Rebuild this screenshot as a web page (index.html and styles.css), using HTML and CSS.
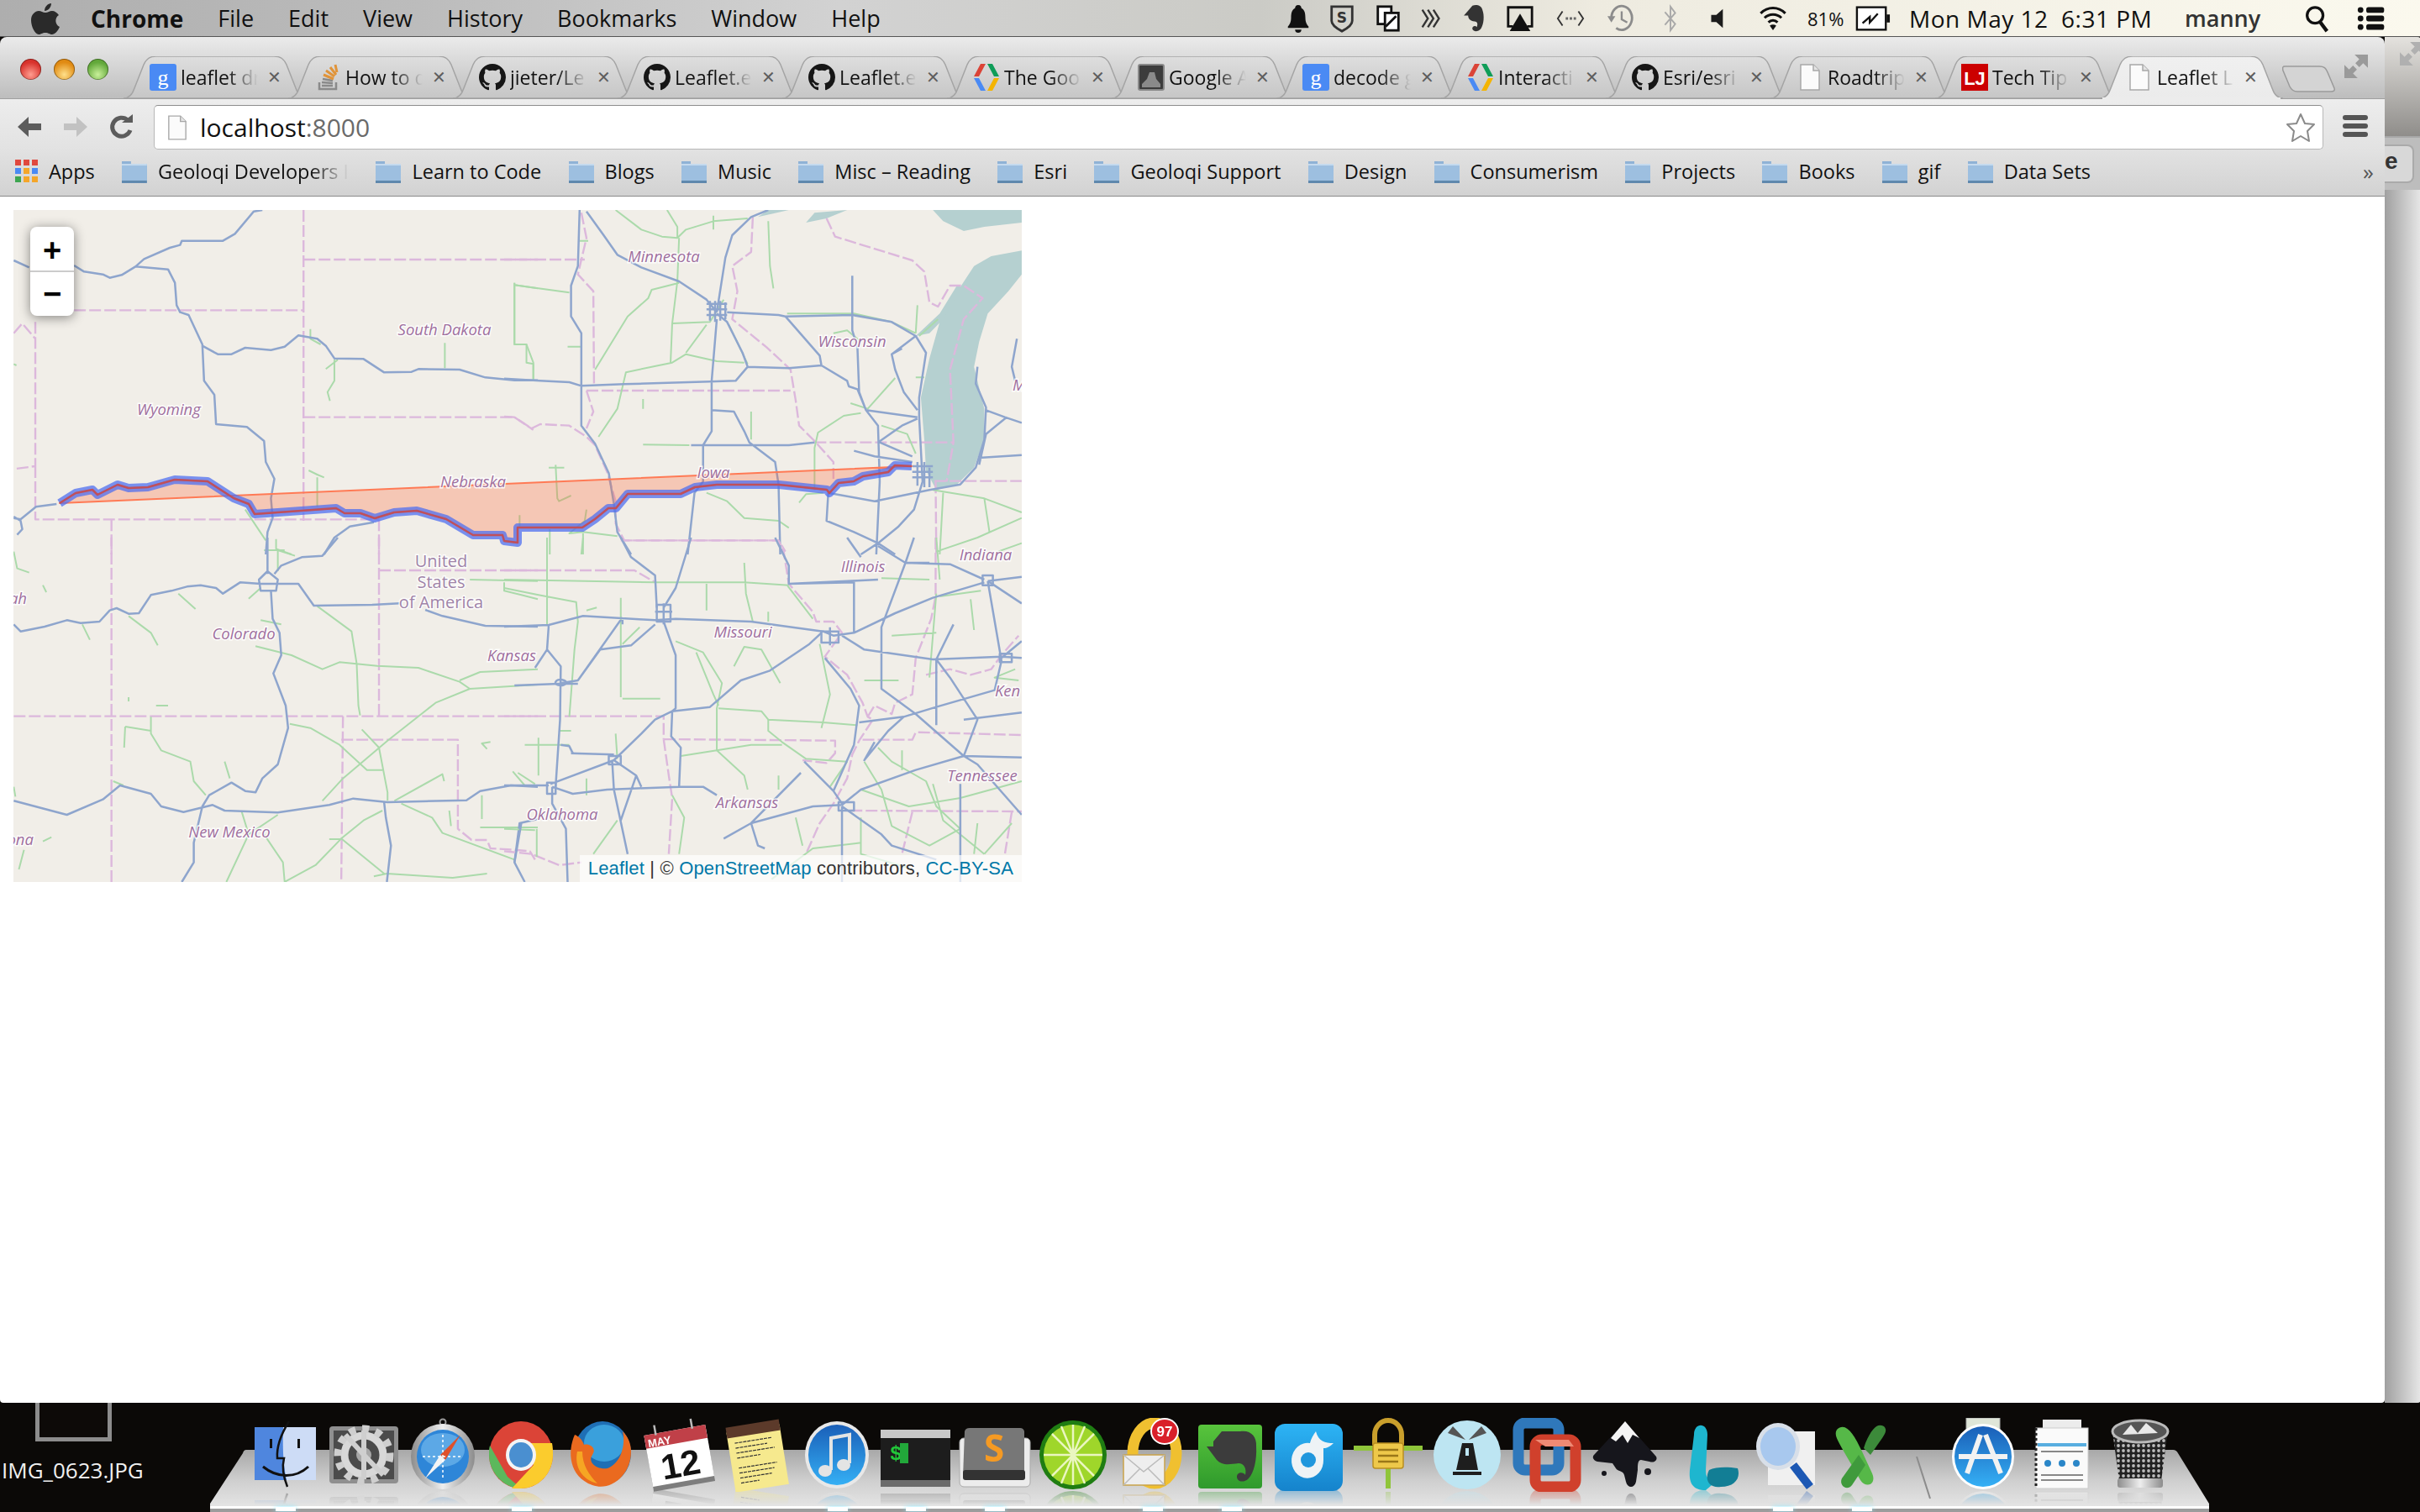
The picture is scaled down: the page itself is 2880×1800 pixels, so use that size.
FILE: index.html
```html
<!DOCTYPE html>
<html lang="en">
<head>
  <meta charset="UTF-8">
  <title>Leaflet Layers</title>
  <link rel="stylesheet" href="styles.css">
</head>
<body>
<svg class="defs" width="0" height="0">
  <defs>
    <linearGradient id="tabOff" x1="0" y1="0" x2="0" y2="1"><stop offset="0" stop-color="#dedede"/><stop offset="1" stop-color="#c6c6c6"/></linearGradient>
    <linearGradient id="tabOn" x1="0" y1="0" x2="0" y2="1"><stop offset="0" stop-color="#f0f0f0"/><stop offset="1" stop-color="#ebebeb"/></linearGradient>
    <linearGradient id="blueBall" x1="0" y1="0" x2="0" y2="1"><stop offset="0" stop-color="#1a5fb8"/><stop offset="1" stop-color="#35b0f5"/></linearGradient>
    <linearGradient id="green" x1="0" y1="0" x2="0" y2="1"><stop offset="0" stop-color="#58c43c"/><stop offset="1" stop-color="#2f9a2c"/></linearGradient>
    <linearGradient id="rdio" x1="0" y1="0" x2="0" y2="1"><stop offset="0" stop-color="#2db4f5"/><stop offset="1" stop-color="#1583cc"/></linearGradient>
    <linearGradient id="steel" x1="0" y1="0" x2="1" y2="0"><stop offset="0" stop-color="#8c8c8c"/><stop offset=".5" stop-color="#eeeeee"/><stop offset="1" stop-color="#8c8c8c"/></linearGradient>
    <linearGradient id="floorFill" x1="0" y1="0" x2="0" y2="1"><stop offset="0" stop-color="#a8a8a8"/><stop offset=".55" stop-color="#cfcfcf"/><stop offset="1" stop-color="#e4e4e4"/></linearGradient>
    <pattern id="mesh" width="6" height="6" patternUnits="userSpaceOnUse"><rect width="6" height="6" fill="#222"/><circle cx="3" cy="3" r="1.9" fill="#bbb"/></pattern>

    <symbol id="tab-shape" viewBox="0 0 218 50">
      <path d="M0,50 C8,50 11,44 13,38 L24,10 C27,3 31,0 39,0 L179,0 C187,0 191,3 194,10 L205,38 C207,44 210,50 218,50 Z"/>
    </symbol>
    <symbol id="fav-g" viewBox="0 0 32 32">
      <rect width="32" height="32" rx="3" fill="#4a8af4"/>
      <text x="16" y="25" text-anchor="middle" class="fav-g-letter">g</text>
    </symbol>
    <symbol id="fav-so" viewBox="0 0 32 32">
      <path d="M6,22 V30 H26 V22" fill="none" stroke="#8a8a8a" stroke-width="2.5"/>
      <path d="M9,26 H22 M9,22 L22,23 M10,18 L22,20" stroke="#8a8a8a" stroke-width="2.5"/>
      <path d="M11,13 L23,18 M14,8 L24,15 M19,4 L26,13 M25,1 L27,10" stroke="#e0943a" stroke-width="3"/>
    </symbol>
    <symbol id="fav-gh" viewBox="0 0 16 16">
      <path fill="#161616" d="M8 0C3.58 0 0 3.58 0 8c0 3.54 2.29 6.53 5.47 7.59.4.07.55-.17.55-.38 0-.19-.01-.82-.01-1.49-2.01.37-2.53-.49-2.69-.94-.09-.23-.48-.94-.82-1.13-.28-.15-.68-.52-.01-.53.63-.01 1.08.58 1.23.82.72 1.21 1.87.87 2.33.66.07-.52.28-.87.51-1.07-1.78-.2-3.64-.89-3.64-3.95 0-.87.31-1.59.82-2.15-.08-.2-.36-1.02.08-2.12 0 0 .67-.21 2.2.82.64-.18 1.32-.27 2-.27.68 0 1.36.09 2 .27 1.53-1.04 2.2-.82 2.2-.82.44 1.1.16 1.92.08 2.12.51.56.82 1.27.82 2.15 0 3.07-1.87 3.75-3.65 3.95.29.25.54.73.54 1.48 0 1.07-.01 1.93-.01 2.2 0 .21.15.46.55.38A8.013 8.013 0 0016 8c0-4.42-3.58-8-8-8z"/>
    </symbol>
    <symbol id="fav-dev" viewBox="0 0 32 32">
      <path d="M9,0 H15 L7,15 H1 Z" fill="#db4437"/>
      <path d="M1,17 H7 L15,32 H9 Z" fill="#4a8af4"/>
      <path d="M17,0 H23 L31,15 H25 Z" fill="#0f9d58"/>
      <path d="M25,17 H31 L23,32 H17 Z" fill="#f4b400"/>
    </symbol>
    <symbol id="fav-ga" viewBox="0 0 32 32">
      <rect x="1" y="1" width="30" height="30" rx="2" fill="#3c3c3c" stroke="#888" stroke-width="2"/>
      <path d="M5,28 L5,24 L11,18 L14,10 L20,10 L22,18 L27,24 L27,28 Z" fill="#8a8a8a"/>
    </symbol>
    <symbol id="fav-doc" viewBox="0 0 26 32">
      <path d="M2,1 H17 L24,8 V31 H2 Z" fill="#fbfbfb" stroke="#a8a8a8" stroke-width="1.5"/>
      <path d="M17,1 V8 H24" fill="#e4e4e4" stroke="#a8a8a8" stroke-width="1.5"/>
    </symbol>
    <symbol id="fav-lj" viewBox="0 0 32 32">
      <rect width="32" height="32" fill="#cc0000"/>
      <text x="16" y="25" text-anchor="middle" class="fav-lj-letters">LJ</text>
    </symbol>
    <symbol id="folder" viewBox="0 0 32 28">
      <path d="M1,28 V2 H12 V5 H31 V28 Z" fill="#8fb2d6"/>
      <rect x="1" y="5" width="30" height="23" fill="#9dbfe0"/>
      <rect x="1" y="25" width="30" height="3" fill="#5f88ad"/>
      <rect x="1" y="5" width="30" height="2" fill="#c5daee"/>
    </symbol>
  </defs>
</svg>

<div class="screen">
  <header class="menubar">
    <svg class="apple" viewBox="0 0 34 38"><path fill="#2a2a2a" d="M24,1 C24,6 20,10 16,10 C16,5 20,1 24,1 Z M17,12 C20,12 22,10 25,10 C28,10 31,12 33,15 C28,18 28,26 34,29 C32,34 28,38 25,38 C22,38 21,36 17,36 C13,36 12,38 9,38 C5,38 0,29 0,21 C0,14 5,10 9,10 C12,10 14,12 17,12 Z"/></svg>
    <nav class="menus">
      <span class="menu-app">Chrome</span>
      <span>File</span>
      <span>Edit</span>
      <span>View</span>
      <span>History</span>
      <span>Bookmarks</span>
      <span>Window</span>
      <span>Help</span>
    </nav>
    <div class="tray">
      <svg viewBox="0 0 32 36"><path fill="#111" d="M16,1 C19,1 20,3 20,5 C24,7 25,11 25,17 C25,23 27,26 29,28 V30 H3 V28 C5,26 7,23 7,17 C7,11 8,7 12,5 C12,3 13,1 16,1 Z M12,32 H20 C20,35 18,36 16,36 C14,36 12,35 12,32 Z"/></svg>
      <svg viewBox="0 0 32 36"><path fill="none" stroke="#333" stroke-width="3" d="M3,3 H29 V21 C29,27 22,31 16,34 C10,31 3,27 3,21 Z"/><text x="16" y="23" text-anchor="middle" class="tray-s">S</text></svg>
      <svg viewBox="0 0 32 36"><rect x="3" y="3" width="17" height="22" fill="#fff" stroke="#111" stroke-width="3"/><rect x="12" y="11" width="17" height="22" fill="#fff" stroke="#111" stroke-width="3"/><path d="M13,28 L26,15" stroke="#111" stroke-width="3"/></svg>
      <svg viewBox="0 0 32 36"><path fill="none" stroke="#333" stroke-width="2.5" d="M4,7 L11,18 L4,29 M11,7 L18,18 L11,29 M18,7 L25,18 L18,29"/></svg>
      <svg viewBox="0 0 32 40"><path fill="#333" d="M9,8 L14,2 C20,0 27,2 28,8 C31,16 30,28 26,34 C22,39 16,39 14,35 C13,31 18,29 20,32 C22,28 21,24 17,24 C11,24 8,20 8,16 H2 Z"/></svg>
      <svg viewBox="0 0 36 36"><path fill="none" stroke="#111" stroke-width="3" d="M9,28 H3 V4 H33 V28 H27"/><path fill="#111" d="M18,12 L31,34 H5 Z"/></svg>
      <svg viewBox="0 0 36 24"><path fill="none" stroke="#333" stroke-width="2" d="M8,3 L2,12 L8,21 M28,3 L34,12 L28,21"/><path stroke="#666" stroke-width="3" stroke-dasharray="3 2" d="M12,12 H25"/></svg>
      <svg viewBox="0 0 36 36"><path fill="none" stroke="#8c8c8c" stroke-width="3" d="M6,18 A13,15 0 1 1 12,30"/><path fill="#8c8c8c" d="M1,15 H11 L6,23 Z"/><path fill="none" stroke="#8c8c8c" stroke-width="2.5" d="M19,9 V19 L26,23"/></svg>
      <svg viewBox="0 0 20 36"><path fill="none" stroke="#a8a8a8" stroke-width="2" d="M3,10 L16,25 L10,33 V3 L16,11 L3,26"/></svg>
      <svg class="tray-sound" viewBox="0 0 26 30"><path fill="#1c1c1c" d="M2,10 H9 L18,2 V28 L9,20 H2 Z"/></svg>
      <svg viewBox="0 0 44 40"><path fill="none" stroke="#111" stroke-width="4" d="M3,12 C14,1 30,1 41,12 M9,19 C16,12 28,12 35,19 M15,26 C19,22 25,22 29,26"/><path fill="#111" d="M22,38 L17,31 C20,29 24,29 27,31 Z"/></svg>
      <span class="tray-pct">81%</span>
      <svg class="tray-batt" viewBox="0 0 44 32"><rect x="2" y="2" width="36" height="28" fill="#fff" stroke="#111" stroke-width="2.5"/><rect x="39" y="11" width="4" height="10" fill="#111"/><path fill="none" stroke="#111" stroke-width="2.5" d="M9,22 L18,14 L18,21 L28,10"/></svg>
      <span class="tray-clock">Mon May 12  6:31 PM</span>
      <span class="tray-user">manny</span>
      <svg viewBox="0 0 32 36"><circle cx="14" cy="14" r="10" fill="none" stroke="#111" stroke-width="3.5"/><path stroke="#111" stroke-width="4.5" d="M20,22 L29,34"/></svg>
      <svg viewBox="0 0 40 36"><g fill="#111"><circle cx="5" cy="6" r="4"/><rect x="13" y="2" width="25" height="8" rx="3"/><circle cx="5" cy="18" r="4"/><rect x="13" y="14" width="25" height="8" rx="3"/><circle cx="5" cy="30" r="4"/><rect x="13" y="26" width="25" height="8" rx="3"/></g></svg>
    </div>
  </header>

  <div class="desktop">
    <main class="window">
      <div class="tabstrip">
        <div class="lights"><i class="light red"></i><i class="light amber"></i><i class="light lime"></i></div>
        <div class="tab"><svg class="tab-bg"><use href="#tab-shape"/></svg><svg class="fav"><use href="#fav-g"/></svg><span class="tab-title">leaflet dr</span><span class="tab-x">✕</span></div>
        <div class="tab"><svg class="tab-bg"><use href="#tab-shape"/></svg><svg class="fav"><use href="#fav-so"/></svg><span class="tab-title">How to d</span><span class="tab-x">✕</span></div>
        <div class="tab"><svg class="tab-bg"><use href="#tab-shape"/></svg><svg class="fav"><use href="#fav-gh"/></svg><span class="tab-title">jieter/Le</span><span class="tab-x">✕</span></div>
        <div class="tab"><svg class="tab-bg"><use href="#tab-shape"/></svg><svg class="fav"><use href="#fav-gh"/></svg><span class="tab-title">Leaflet.e</span><span class="tab-x">✕</span></div>
        <div class="tab"><svg class="tab-bg"><use href="#tab-shape"/></svg><svg class="fav"><use href="#fav-gh"/></svg><span class="tab-title">Leaflet.e</span><span class="tab-x">✕</span></div>
        <div class="tab"><svg class="tab-bg"><use href="#tab-shape"/></svg><svg class="fav"><use href="#fav-dev"/></svg><span class="tab-title">The Goo</span><span class="tab-x">✕</span></div>
        <div class="tab"><svg class="tab-bg"><use href="#tab-shape"/></svg><svg class="fav"><use href="#fav-ga"/></svg><span class="tab-title">Google A</span><span class="tab-x">✕</span></div>
        <div class="tab"><svg class="tab-bg"><use href="#tab-shape"/></svg><svg class="fav"><use href="#fav-g"/></svg><span class="tab-title">decode g</span><span class="tab-x">✕</span></div>
        <div class="tab"><svg class="tab-bg"><use href="#tab-shape"/></svg><svg class="fav"><use href="#fav-dev"/></svg><span class="tab-title">Interacti</span><span class="tab-x">✕</span></div>
        <div class="tab"><svg class="tab-bg"><use href="#tab-shape"/></svg><svg class="fav"><use href="#fav-gh"/></svg><span class="tab-title">Esri/esri</span><span class="tab-x">✕</span></div>
        <div class="tab"><svg class="tab-bg"><use href="#tab-shape"/></svg><svg class="fav fav-page"><use href="#fav-doc"/></svg><span class="tab-title">Roadtrip</span><span class="tab-x">✕</span></div>
        <div class="tab"><svg class="tab-bg"><use href="#tab-shape"/></svg><svg class="fav"><use href="#fav-lj"/></svg><span class="tab-title">Tech Tip</span><span class="tab-x">✕</span></div>
        <div class="tab tab-on"><svg class="tab-bg"><use href="#tab-shape"/></svg><svg class="fav fav-page"><use href="#fav-doc"/></svg><span class="tab-title">Leaflet L</span><span class="tab-x">✕</span></div>
        <svg class="newtab" viewBox="0 0 64 34"><path d="M3,2 H44 C50,2 52,4 54,9 L62,28 C63,31 61,32 58,32 H18 C13,32 11,30 9,26 L1,7 C0,3 1,2 3,2 Z" fill="#d4d4d4" stroke="#9a9a9a" stroke-width="1.5"/></svg>
        <svg class="expand" viewBox="0 0 30 30"><path fill="#9a9a9a" d="M0,30 V13 L6,19 L11,14 L16,19 L11,24 L17,30 Z M30,0 V17 L24,11 L19,16 L14,11 L19,6 L13,0 Z"/></svg>
      </div>

      <div class="toolbar">
        <svg class="tool" viewBox="0 0 30 30"><path fill="#5c5c5c" d="M14,3 V11 H29 V19 H14 V27 L1,15 Z"/></svg>
        <svg class="tool" viewBox="0 0 30 30"><path fill="#c2c2c2" d="M16,3 V11 H1 V19 H16 V27 L29,15 Z"/></svg>
        <svg class="tool" viewBox="0 0 30 30"><path fill="none" stroke="#5c5c5c" stroke-width="5" d="M25,19 A11,11 0 1 1 22,7"/><path fill="#5c5c5c" d="M15,10 H28 V0 Z"/></svg>
        <div class="omnibox">
          <svg class="omni-page"><use href="#fav-doc"/></svg>
          <span class="url">localhost<em>:8000</em></span>
          <svg class="star" viewBox="0 0 36 36"><path fill="#fff" stroke="#8a8a8a" stroke-width="2" stroke-linejoin="round" d="M18,2 L23,13 L34,14 L26,22 L28,34 L18,28 L8,34 L10,22 L2,14 L13,13 Z"/></svg>
        </div>
        <div class="hamburger"><i></i><i></i><i></i></div>
      </div>

      <div class="bookmarks">
        <div class="bm bm-apps">
          <svg class="apps-grid" viewBox="0 0 28 28"><g><rect width="7" height="7" x="0" y="0" fill="#e0483e"/><rect width="7" height="7" x="10" y="0" fill="#e0483e"/><rect width="7" height="7" x="20" y="0" fill="#e0483e"/><rect width="7" height="7" x="0" y="10" fill="#4a8af4"/><rect width="7" height="7" x="10" y="10" fill="#f4a62a"/><rect width="7" height="7" x="20" y="10" fill="#4a8af4"/><rect width="7" height="7" x="0" y="20" fill="#3da650"/><rect width="7" height="7" x="10" y="20" fill="#f4a62a"/><rect width="7" height="7" x="20" y="20" fill="#f4a62a"/></g></svg>
          <span>Apps</span>
        </div>
        <div class="bm bm-long"><svg class="folder"><use href="#folder"/></svg><span class="bm-fade">Geoloqi Developers I</span></div>
        <div class="bm"><svg class="folder"><use href="#folder"/></svg><span>Learn to Code</span></div>
        <div class="bm"><svg class="folder"><use href="#folder"/></svg><span>Blogs</span></div>
        <div class="bm"><svg class="folder"><use href="#folder"/></svg><span>Music</span></div>
        <div class="bm"><svg class="folder"><use href="#folder"/></svg><span>Misc – Reading</span></div>
        <div class="bm"><svg class="folder"><use href="#folder"/></svg><span>Esri</span></div>
        <div class="bm"><svg class="folder"><use href="#folder"/></svg><span>Geoloqi Support</span></div>
        <div class="bm"><svg class="folder"><use href="#folder"/></svg><span>Design</span></div>
        <div class="bm"><svg class="folder"><use href="#folder"/></svg><span>Consumerism</span></div>
        <div class="bm"><svg class="folder"><use href="#folder"/></svg><span>Projects</span></div>
        <div class="bm"><svg class="folder"><use href="#folder"/></svg><span>Books</span></div>
        <div class="bm"><svg class="folder"><use href="#folder"/></svg><span>gif</span></div>
        <div class="bm"><svg class="folder"><use href="#folder"/></svg><span>Data Sets</span></div>
        <span class="bm-more">»</span>
      </div>

      <div class="content">
        <div class="map">
          <svg class="map-svg" viewBox="16 250 1200 800" width="1200" height="800">
            <!-- water -->
            <g transform="translate(600 240) scale(.40816 .33333)" class="lake">
              <path d="M1330,305 L1370,230 L1420,195 L1509,175 L1509,260 L1470,320 L1410,400 L1385,500 L1370,590 L1400,740 L1400,850 L1370,950 L1320,1010 L1260,1030 L1230,960 L1225,850 L1215,700 L1240,560 L1270,430 Z"/>
              <path d="M1200,480 L1270,400 L1320,300 L1335,305 L1280,420 L1240,470 Z"/>
              <path d="M880,75 L905,40 L1000,30 L940,60 Z"/>
              <path d="M1250,30 L1509,30 L1509,75 L1400,90 L1340,105 L1280,70 Z"/>
              <path d="M740,55 L830,30 L770,30 Z"/>
            </g>
            <!-- north west -->
            <g class="roads" transform="translate(0 240) scale(.40816 .33333)">
              <path class="b" d="M885,30 L885,1140 M885,207 L1568,207 M216,388 L885,388 M103,430 L103,945 L40,955 M40,470 L65,435 L103,490 M885,770 L1500,770 L1555,815 M103,945 L103,1135 L1105,1135 M325,1135 L325,1260 M1105,1135 L1105,1260"/>
              <path class="g" d="M1500,290 L1500,510 L1535,510 L1535,575 L1555,580 L1555,638 M1500,298 L1568,310 M1297,505 L1297,595 M905,455 L905,490 L935,510 M985,565 L950,598 M975,565 L975,640 L955,680 L962,712 M900,960 L925,975 L945,985 M925,985 L925,1090 M715,1100 L775,1210 M805,1205 L805,1240 L850,1260 M770,1245 L830,1245 M40,580 L48,585"/>
              <path class="r" d="M40,210 L85,235 M216,228 L245,250 L300,260 L320,272 L355,262 L395,232 L420,205 L495,165 L525,155 L530,140 L650,140 L685,115 L740,35 L765,30 M395,232 L490,242 L510,290 L515,370 L525,395 L550,405 L590,510 L595,640 L625,690 L630,795 L720,805 L770,855 L775,930 L800,990 L790,1060 L795,1130 L780,1180 L775,1260 M590,515 L635,545 L675,545 L715,522 L790,530 L830,518 L870,478 L925,490 L950,515 L975,560 L1060,562 L1120,610 L1200,608 L1220,598 L1340,600 L1415,628 L1500,638 L1568,638 M40,1130 L60,1135 L105,1090 L165,1080 M40,1125 L60,1140 L65,1170 L50,1190 M1090,1145 L1020,1160 L975,1200 L945,1260"/>
            </g>
            <!-- north east -->
            <g class="roads" transform="translate(600 240) scale(.40816 .33333)">
              <path class="b" d="M0,207 L235,207 M225,40 L240,130 L215,260 L260,320 L262,650 M240,675 L835,675 M240,675 L260,750 L240,810 M0,768 L30,770 L80,810 L105,795 L190,800 L240,840 L265,870 L300,965 L325,1070 L325,1150 L350,1210 L800,1210 L820,1250 M725,55 L720,180 L665,230 L680,320 L665,420 L765,520 L835,600 L850,710 L860,800 L905,855 L960,930 L960,990 M905,860 L1310,860 M940,60 L965,125 L1190,210 L1225,250 L1240,360 L1265,375 L1300,300 L1340,300 L1395,345 L1340,420 L1300,600 L1310,860 L1290,1000 M1255,998 L1509,998 M1258,1000 L1260,1260"/>
              <path class="g" d="M30,290 L30,510 L65,510 L85,575 L85,632 M30,298 L100,310 L190,325 M185,518 L225,518 M220,140 L245,140 M265,600 L360,410 L420,345 L430,315 L510,290 M510,130 L505,285 L490,435 L485,580 M325,30 L400,100 L460,125 L505,130 L530,100 L610,70 L710,60 M610,50 L610,100 M475,30 L505,90 L505,130 M770,70 L775,230 L785,310 M490,435 L600,430 L640,350 M530,540 L590,440 M275,840 L330,740 L355,610 L430,590 L490,575 L530,545 L620,570 L700,575 M405,705 L405,740 M655,440 L710,580 M825,400 L1020,400 L1130,430 L1200,470 M1200,470 L1205,370 M1210,480 L1265,420 M1040,500 L1000,460 L960,470 M1140,630 L1060,740 L1010,720 M1200,628 L1225,628 M1040,755 L990,765 L915,825 L905,880 L905,1030 M1100,800 L1175,830 L1200,900 M720,750 L720,850 M150,940 L155,1060 L160,1070 L195,1050 M130,950 L175,950 M405,868 L540,870 M240,1100 L235,1140 L190,1185 L230,1180 L330,1195 M230,1185 L230,1260 M45,1120 L45,1160 M133,1170 L133,1260 M590,1040 L650,1070 L700,1130 L800,1140 L830,1165 M860,1075 L880,1045 L930,1040 M1250,1030 L1400,1060 L1509,1110 M1280,1040 L1270,1260 M1400,1060 L1415,1180 M1509,1130 L1380,1200 L1260,1250"/>
              <path class="r" d="M220,30 L215,230 L195,300 L195,410 L225,470 L225,800 L265,865 L305,970 L320,1080 L330,1180 L370,1260 M240,35 L290,120 L330,190 L400,235 L510,285 L590,350 L620,395 M0,632 L105,640 L190,645 L225,658 L350,652 L600,643 L675,640 L710,590 L830,595 L925,585 L1000,640 L1005,660 L1030,670 L1055,745 M650,395 L800,405 L820,410 L920,550 L925,585 M620,395 L645,200 L665,120 L720,55 L770,30 M620,420 L605,640 L605,820 L580,870 L580,1000 L555,1040 L535,1260 M605,745 L670,750 L700,820 L715,860 L790,930 L800,1010 L805,1260 M545,870 L830,870 L905,860 M820,410 L1015,405 L1130,430 L1200,480 L1230,540 L1210,700 L1210,770 M1015,265 L1015,460 L1030,520 L1035,680 L1055,745 L1090,800 L1095,1000 L1085,1260 M1055,745 L1205,770 M1130,545 L1140,600 L1165,680 L1205,745 M1200,480 L1130,545 L1160,525 M1090,860 L1160,800 L1205,775 M1095,860 L1190,910 M1020,890 L1080,910 L1190,930 M1210,770 L1220,1000 L1195,1100 L1150,1160 L1090,1220 L1040,1260 M1380,590 L1375,650 L1405,735 L1400,850 L1375,950 L1330,1010 L1240,1030 M1495,490 L1480,590 L1490,640 M1405,745 L1460,770 L1509,790 M1465,770 L1405,830 L1385,940 M1385,915 L1509,905 M945,1040 L1080,1070 L1240,1030 M945,1040 L940,1140 L1020,1180 L1090,1220 L1140,1260 M710,590 L695,540 L650,430 L620,400"/>
              <path class="r" d="M590,365 H650 M590,385 H650 M590,405 H650 M600,355 V425 M615,355 V430 M630,355 V425 M645,360 V420 M1190,945 H1250 M1190,965 H1250 M1190,985 H1250 M1205,930 V1015 M1225,930 V1020 M1240,950 V1020"/>
            </g>
            <!-- south west -->
            <g class="roads" transform="translate(0 640) scale(.40816 .33333)">
              <path class="b" d="M40,638 L1568,638 M325,0 L325,1230 M1105,0 L1105,638 M1105,117 L1568,117 M1000,638 L995,1230 M995,722 L1335,722 L1335,1040 L1375,1080 L1420,1080 L1430,1110 L1500,1115 L1545,1120 L1560,1150"/>
              <path class="g" d="M40,50 L50,110 L85,125 M125,170 L135,195 M520,200 L570,255 M375,280 L440,340 L460,385 M240,310 L262,365 M760,295 L820,310 M745,388 L850,420 L940,470 L990,445 L1100,458 L1220,465 L1340,515 L1370,540 L1568,525 M1340,510 L1400,480 L1568,470 M925,245 L1025,335 L1040,450 L1045,600 L1050,635 M1370,540 L1270,590 L1130,725 L1000,860 L940,940 M1055,685 L1105,750 L1130,910 L1130,940 M845,665 L905,680 L990,740 L1070,830 L1115,830 M1150,940 L1290,845 L1295,870 M1170,950 L1260,1000 L1290,1055 L1500,1150 M1115,975 L1060,1010 L995,1075 L920,1170 L830,1230 M995,1075 L1120,1200 M960,1077 L995,1077 M705,980 L725,1060 L660,1230 M770,1060 L825,1160 L830,1230 M810,990 L725,1060 M440,640 L440,700 L470,760 L555,800 L565,870 L600,920 M365,675 L440,690 M365,675 L362,750 M655,800 L670,860 M725,218 L760,180 M810,120 L810,45 L860,65 M1430,730 L1405,735 L1420,755 M1495,835 L1530,885 M1090,1210 L1128,1200 L1320,1215 L1420,1200 M1400,1035 L1568,1035 M1405,920 L1405,1005 M1310,975 L1315,1030 M1470,160 L1470,190 L1520,205 L1568,220 M1370,150 L1568,155 M330,870 L360,885 M375,570 L375,585 M455,600 L490,600 M40,890 L45,925 M125,1085 L150,1070 M70,1115 L55,1185"/>
              <path class="r" d="M780,0 L780,130 M985,0 L940,65 L880,70 L820,100 L800,130 M40,310 L60,335 L130,318 L195,295 L235,305 L290,300 L320,260 L340,252 L375,272 L405,270 L440,205 L500,190 L545,175 L585,170 L630,180 L650,200 L700,160 L760,165 L870,165 L915,243 L1085,240 L1165,235 M1240,258 L1290,280 L1415,315 L1568,318 M790,190 L795,290 L815,340 L820,420 L797,485 L833,600 L840,680 L810,810 L765,860 L745,910 L715,905 L675,875 L610,920 L590,960 L565,1090 L565,1160 L530,1230 M40,940 L195,990 L300,935 L350,885 L440,915 L470,960 L535,980 L620,955 L655,975 L810,982 L960,955 L1030,932 L1130,945 L1360,938 L1400,905 L1490,885 L1568,890 M1120,945 L1125,1000 L1140,1100 L1128,1230 M1568,1005 L1515,1020 L1500,1160 M780,120 L755,150 L760,190 L805,190 L810,150 Z"/>
            </g>
            <!-- south east -->
            <g class="roads" transform="translate(600 640) scale(.40816 .33333)">
              <path class="b" d="M0,117 L380,117 L440,160 M340,10 L800,10 L815,50 L830,165 L900,265 L910,300 L960,300 L985,340 L935,425 L1000,490 L1045,590 L1060,640 L1075,650 L1035,725 L1015,775 L1000,860 L960,950 L920,1020 L880,1130 M0,638 L465,638 L465,720 M465,720 L965,725 L965,770 L940,805 L870,795 M1045,722 L1190,722 L1200,695 L1509,705 M1258,0 L1258,210 L1245,290 L1200,430 L1190,560 L1140,590 L1130,630 L1080,600 L1060,640 M1230,490 L1300,470 L1360,490 L1420,470 L1450,420 L1500,350 M465,720 L480,850 L490,930 L480,1130 M0,1120 L80,1130 L160,1170 L225,1160 M1010,975 L1509,978 M1190,980 L1160,1130 M1480,980 L1460,1130"/>
              <path class="g" d="M0,150 L440,160 L700,160 L830,170 M125,0 L125,310 M230,0 L225,60 M0,180 L100,205 L210,230 L215,300 L205,400 L190,640 M340,215 L340,570 M240,260 L270,250 M345,575 L455,575 M590,165 L590,260 M700,90 L705,200 L725,300 M500,370 L580,410 L635,520 L620,610 L620,760 L700,850 L710,900 M560,410 L610,560 L625,600 M770,265 L770,300 M805,520 L750,400 L700,390 L670,460 M625,610 L750,620 L770,650 L930,660 L1030,670 M770,650 L770,690 L810,730 L880,790 L1000,800 M515,780 L620,760 L720,740 L810,740 M60,740 L190,740 M100,715 L100,850 M345,380 L395,320 M40,840 L90,880 M240,860 L240,920 M325,700 L330,790 M0,1040 L90,1045 M95,1040 L95,1140 M330,1010 L260,1130 M490,920 L525,1000 L510,1130 M800,850 L800,900 M920,380 L950,560 L925,680 M825,170 L900,290 M1050,510 L1150,510 M1130,350 L1260,340 M1260,200 L1240,500 M1360,220 L1370,330 M1390,190 L1270,210 M1260,0 L1270,150 M1050,800 L1100,900 L1130,1030 L1240,1100 L1330,1040 M1000,800 L950,890 M1090,750 L1130,800 L1230,870 L1260,960 L1330,1040 M1040,900 L1180,960 L1330,930 L1509,870 M1160,760 L1160,830 M1250,880 L1280,1010 L1400,1130 M850,1000 L870,1100 M1040,1000 L1040,1130 L1180,1180 M780,1220 L900,1110 L1040,1090 M1480,1020 L1400,1130 M1380,1020 L1370,1130 M1509,20 L1440,50 M1490,470 L1430,500 L1500,510 M1100,145 L1240,150 M160,690 L195,690"/>
              <path class="r" d="M340,0 L370,70 L440,135 L445,250 M545,0 L500,180 L465,250 M0,318 L130,312 L230,280 L440,295 L500,290 L720,300 L840,320 L930,335 L960,350 L1020,340 L1140,270 L1250,215 L1400,160 M130,312 L125,400 L165,460 L163,650 L150,890 M125,400 L90,465 M30,528 L160,522 L215,522 M345,285 L215,510 L165,520 M345,285 L345,310 M440,310 L370,385 L280,400 L215,510 M465,300 L500,420 L500,610 L490,620 L600,605 L690,510 L775,475 L890,380 L925,340 M490,620 L440,650 L400,700 L320,795 L135,880 M490,620 L487,710 L515,750 L510,890 M320,795 L385,850 L400,890 M195,770 L320,775 M165,740 L190,745 L200,770 M140,890 L200,915 L300,900 L510,890 L580,890 L620,920 M140,890 L140,950 L180,1040 L185,1230 M0,885 L130,885 M315,800 L320,900 L360,1130 M385,850 L340,1010 M50,1020 L30,1160 L60,1230 M720,1020 L900,960 L985,955 L1040,900 L1200,830 L1340,780 L1509,785 M720,1020 L640,1075 M720,1020 L740,1100 L760,1110 M865,840 L720,1020 M985,950 L960,905 L1020,740 L1035,600 L1010,540 L935,430 M985,960 L985,1230 M985,960 L1100,1060 L1130,1100 L1260,1150 M960,905 L875,800 M1340,780 L1200,630 L1100,540 L1100,320 L1170,90 L1240,90 M1340,780 L1380,650 L1300,500 L1260,435 L1310,310 M1035,660 L1165,640 L1260,605 L1430,545 L1450,440 L1410,155 M1165,640 L1120,690 L1050,795 L1080,730 M985,350 L1050,400 L1250,435 L1450,425 L1509,430 M1340,780 L1380,810 L1509,990 M1260,435 L1260,670 M1410,155 L1509,235 M1410,155 L1509,140 M1170,90 L1300,95 L1400,150 M1020,340 L1020,160 L830,165 L1090,150 M1090,30 L1170,90 L1195,0 M830,165 L830,100 L790,0 M1000,0 L1040,70 M1450,430 L1509,370 M1340,650 L1509,625 M1330,880 L1330,1230"/>
              <path class="r" d="M445,240 H485 V300 H445 Z M440,265 H490 M465,235 V310 M925,335 H975 V375 H925 Z M950,320 V385 M305,780 H340 V810 H305 Z M125,875 H150 V915 H125 Z M150,515 A15,10 0 1 0 180,520 A15,10 0 1 0 150,515 M1395,135 H1425 V170 H1395 Z M1445,415 H1480 V445 H1445 Z M975,945 H1020 V975 H975 Z"/>
            </g>

            <!-- route -->
            <path class="route-fill" d="M71,599 L90,587 L110,583 L116,589 L140,577 L153,581 L176,580 L208,571 L247,573 L278,593 L296,600 L303,612 L400,605 L410,611 L429,611 L446,617 L469,610 L496,608 L531,618 L563,637 L598,637 L600,644 L616,646 L616,628 L693,628 L708,618 L724,605 L733,605 L747,588 L810,588 L827,580 L853,577 L927,577 L984,583 L987,587 L998,575 L1016,573 L1027,567 L1057,562 L1065,554 L1085,555 Z"/>
            <path class="route-blue" d="M71,599 L90,587 L110,583 L116,589 L140,577 L153,581 L176,580 L208,571 L247,573 L278,593 L296,600 L303,612 L400,605 L410,611 L429,611 L446,617 L469,610 L496,608 L531,618 L563,637 L598,637 L600,644 L616,646 L616,628 L693,628 L708,618 L724,605 L733,605 L747,588 L810,588 L827,580 L853,577 L927,577 L984,583 L987,587 L998,575 L1016,573 L1027,567 L1057,562 L1065,554 L1085,555"/>
            <path class="route-red" d="M71,599 L90,587 L110,583 L116,589 L140,577 L153,581 L176,580 L208,571 L247,573 L278,593 L296,600 L303,612 L400,605 L410,611 L429,611 L446,617 L469,610 L496,608 L531,618 L563,637 L598,637 L600,644 L616,646 L616,628 L693,628 L708,618 L724,605 L733,605 L747,588 L810,588 L827,580 L853,577 L927,577 L984,583 L987,587 L998,575 L1016,573 L1027,567 L1057,562 L1065,554 L1085,555"/>

            <!-- labels -->
            <g class="labels">
              <text x="529" y="399">South Dakota</text>
              <text x="201" y="494">Wyoming</text>
              <text x="563" y="580">Nebraska</text>
              <text x="790" y="312">Minnesota</text>
              <text x="1014" y="413">Wisconsin</text>
              <text x="849" y="569">Iowa</text>
              <text x="1205" y="465" class="start">M</text>
              <text x="290" y="761">Colorado</text>
              <text x="609" y="787">Kansas</text>
              <text x="273" y="997">New Mexico</text>
              <text x="32" y="719" class="end">ah</text>
              <text x="40" y="1006" class="end">ona</text>
              <text x="884" y="759">Missouri</text>
              <text x="1027" y="681">Illinois</text>
              <text x="1173" y="667">Indiana</text>
              <text x="1184" y="829" class="start">Ken</text>
              <text x="1169" y="930">Tennessee</text>
              <text x="889" y="962">Arkansas</text>
              <text x="669" y="976">Oklahoma</text>
            </g>
            <g class="labels labels-country">
              <text x="525" y="675">United</text>
              <text x="525" y="700">States</text>
              <text x="525" y="724">of America</text>
            </g>
          </svg>
          <div class="zoom-ctl">
            <a class="zoom-btn zoom-in">+</a>
            <a class="zoom-btn zoom-out">−</a>
          </div>
          <div class="attribution"><a>Leaflet</a> | © <a>OpenStreetMap</a> contributors, <a>CC-BY-SA</a></div>
        </div>
      </div>
    </main>

    <aside class="behind">
      <div class="behind-top">
        <svg class="behind-expand" viewBox="0 0 30 30"><path fill="#b0b0b0" d="M0,30 V13 L6,19 L11,14 L16,19 L11,24 L17,30 Z M30,0 V17 L24,11 L19,16 L14,11 L19,6 L13,0 Z"/></svg>
      </div>
      <div class="behind-btn"><span>e</span></div>
      <div class="behind-rest"></div>
    </aside>
  </div>

  <footer class="dock">
    <svg class="floor" viewBox="0 0 2880 130" width="2880" height="130">
      <path class="floor-top" d="M293,56 H2586 Q2590,56 2592,60 L2629,120 V123 H250 V120 L289,60 Q290,56 293,56 Z"/>
      <rect class="floor-shine" x="250" y="123" width="2379" height="3"/>
      <rect class="floor-edge" x="250" y="126" width="2379" height="4"/>
      <path class="floor-sep" d="M2281,64 L2297,114"/>
    </svg>
    <div class="desk-file">
      <div class="desk-thumb"></div>
      <div class="desk-name">IMG_0623.JPG</div>
    </div>
    <div class="dock-apps">
      <div class="dock-item"><svg viewBox="0 0 94 88"><rect x="11" y="11" width="73" height="63" fill="#4f86de"/><path d="M45,11 H84 V74 H49 C46,60 44,45 45,11 Z" fill="#cddcf6"/><path d="M52,4 C42,20 37,35 38,48 L46,48 C43,60 46,72 50,82" fill="none" stroke="#111" stroke-width="2.5"/><path d="M21,58 C38,72 60,72 75,58" fill="none" stroke="#111" stroke-width="3"/><rect x="29" y="25" width="3" height="11" fill="#111"/><rect x="62" y="25" width="3" height="11" fill="#111"/></svg><i class="run"></i></div>
      <div class="dock-item"><svg viewBox="0 0 94 88"><rect x="6" y="10" width="82" height="68" rx="4" fill="#8f8f8f"/><rect x="11" y="15" width="72" height="58" fill="#4b4b4b"/><circle cx="47" cy="44" r="23" fill="none" stroke="#d8d8d8" stroke-width="9"/><circle cx="47" cy="44" r="31" fill="none" stroke="#cfcfcf" stroke-width="9" stroke-dasharray="8 8"/><circle cx="47" cy="44" r="9" fill="#a8a8a8"/><path d="M25,20 L47,44 M70,68 L47,44 M47,15 V73" stroke="#cfcfcf" stroke-width="6"/></svg></div>
      <div class="dock-item"><svg viewBox="0 0 94 88"><circle cx="47" cy="5" r="3.5" fill="none" stroke="#999" stroke-width="2"/><ellipse cx="47" cy="46" rx="38" ry="39" fill="url(#steel)"/><ellipse cx="47" cy="46" rx="31" ry="32" fill="#2e86d8"/><ellipse cx="47" cy="38" rx="26" ry="20" fill="#7cc0f0" opacity=".6"/><path d="M68,20 L50,50 L44,44 Z" fill="#e0502a"/><path d="M26,72 L44,44 L50,50 Z" fill="#f4f4f4"/><path d="M47,20 V72 M23,46 H71" stroke="#fff" stroke-width="1.5" stroke-dasharray="3 3"/></svg></div>
      <div class="dock-item"><svg viewBox="0 0 94 88"><ellipse cx="47" cy="44" rx="38" ry="40" fill="#db4437"/><path d="M10,33 L31,70 L47,84 C28,84 9,66 9,44 C9,40 9,36 10,33 Z" fill="#5cb85c"/><path d="M47,30 H84 C85,35 85,40 85,44 C85,66 68,84 47,84 L36,84 L62,56 Z" fill="#fbcc2d"/><ellipse cx="47" cy="44" rx="18" ry="19" fill="#f4f4f4"/><ellipse cx="47" cy="44" rx="14" ry="15" fill="#4a8fd0"/></svg><i class="run"></i></div>
      <div class="dock-item"><svg viewBox="0 0 94 88"><ellipse cx="50" cy="42" rx="34" ry="38" fill="#1f6fb5"/><ellipse cx="52" cy="30" rx="24" ry="22" fill="#3aa0dc"/><path d="M17,20 C8,40 10,70 38,80 C60,88 84,68 84,40 C84,30 80,22 74,16 C78,32 72,54 56,60 C42,62 32,52 38,44 C44,36 34,30 28,32 C26,26 22,22 17,20 Z" fill="#ea6a1f"/><path d="M20,40 C16,58 26,74 44,78 C34,68 26,56 26,40 Z" fill="#f6a623"/></svg></div>
      <div class="dock-item"><svg viewBox="0 0 94 88"><g transform="rotate(-10 47 44)"><rect x="10" y="16" width="74" height="66" fill="#7d7d7d"/><rect x="10" y="14" width="74" height="62" fill="#fff"/><path d="M10,14 H84 V30 H10 Z" fill="#c04048"/><text x="13" y="29" class="cal-month">MAY</text><text x="47" y="70" text-anchor="middle" class="cal-day">12</text><path d="M24,16 V4 M68,16 V4" stroke="#bbb" stroke-width="2.5"/></g></svg></div>
      <div class="dock-item"><svg viewBox="0 0 94 88"><g transform="rotate(-9 47 44)"><rect x="14" y="12" width="64" height="72" fill="#f6e98e"/><rect x="14" y="6" width="64" height="13" fill="#5c3a2a"/><path d="M22,26 H66 M22,32 H60 M22,38 H68 M22,44 H50 M22,56 H68 M22,62 H64 M22,68 H60 M22,74 H44" stroke="#333" stroke-width="1.2" stroke-dasharray="4 1"/></g></svg></div>
      <div class="dock-item"><svg viewBox="0 0 94 88"><ellipse cx="47" cy="44" rx="38" ry="40" fill="#e8e8e8"/><ellipse cx="47" cy="44" rx="34" ry="36" fill="url(#blueBall)"/><path d="M40,62 V24 L62,20 V54" fill="none" stroke="#e4e4e4" stroke-width="4"/><ellipse cx="33" cy="63" rx="8" ry="7" fill="#e4e4e4"/><ellipse cx="55" cy="56" rx="8" ry="7" fill="#e4e4e4"/></svg><i class="run"></i></div>
      <div class="dock-item"><svg viewBox="0 0 94 88"><rect x="6" y="14" width="83" height="68" fill="#1d1d1d"/><rect x="6" y="14" width="83" height="10" fill="#c8c8c8"/><rect x="6" y="74" width="83" height="8" fill="#6b6b6b"/><text x="17" y="50" class="term-dollar">$</text><rect x="29" y="30" width="10" height="24" fill="#22a83a"/></svg><i class="run"></i></div>
      <div class="dock-item"><svg viewBox="0 0 94 88"><rect x="6" y="24" width="84" height="58" rx="5" fill="#ececec" stroke="#aaa"/><path d="M12,16 Q13,12 18,12 H78 Q82,12 83,16 V70 H10 Z" fill="#777"/><rect x="10" y="62" width="74" height="12" rx="3" fill="#333"/><text x="47" y="52" text-anchor="middle" class="sublime-s">S</text></svg><i class="run"></i></div>
      <div class="dock-item"><svg viewBox="0 0 94 88"><ellipse cx="47" cy="44" rx="40" ry="41" fill="#1f7d12"/><ellipse cx="47" cy="44" rx="35" ry="36" fill="#9fd62a"/><path d="M47,8 V80 M12,44 H82 M22,19 L72,69 M72,19 L22,69 M33,10 L61,78 M61,10 L33,78" stroke="#eaf6c0" stroke-width="2.5"/></svg></div>
      <div class="dock-item"><svg viewBox="0 0 94 88"><ellipse cx="50" cy="42" rx="26" ry="36" fill="none" stroke="#f0c030" stroke-width="13"/><rect x="13" y="44" width="49" height="36" fill="#eee" stroke="#c9a24a" stroke-width="1.5"/><path d="M13,44 L37,64 L62,44 M13,80 L33,60 M62,80 L42,60" fill="none" stroke="#bbb" stroke-width="1.5"/><ellipse cx="62" cy="16" rx="16" ry="15" fill="#d9202a" stroke="#fff" stroke-width="2"/><text x="62" y="22" text-anchor="middle" class="badge-num">97</text></svg><i class="run"></i></div>
      <div class="dock-item"><svg viewBox="0 0 94 88"><rect x="8" y="8" width="76" height="76" rx="4" fill="url(#green)"/><path d="M26,28 L36,16 H58 C70,14 78,22 77,34 C78,50 74,66 68,72 C62,78 54,76 54,70 C54,64 62,64 64,68 C66,60 62,54 56,54 C42,56 36,56 30,50 L18,34 H26 Z" fill="#3c3c3c"/></svg><i class="run"></i></div>
      <div class="dock-item"><svg viewBox="0 0 94 88"><rect x="6" y="7" width="81" height="80" rx="12" fill="url(#rdio)"/><path d="M55,16 C58,28 66,30 76,30 C70,36 66,36 64,36 V50 A19,21 0 1 1 48,30 C49,25 52,20 55,16 Z" fill="#eef3f6"/><circle cx="46" cy="50" r="9" fill="#2097dd"/></svg></div>
      <div class="dock-item"><svg viewBox="0 0 94 88"><path d="M6,36 H88 M47,60 V84" stroke="#8fc53a" stroke-width="6"/><path d="M31,32 V20 A16,17 0 0 1 63,20 V32" fill="none" stroke="#c99f2c" stroke-width="6"/><rect x="29" y="30" width="36" height="30" rx="3" fill="#eec84a" stroke="#b98f20" stroke-width="1.5"/><path d="M35,38 H59 M35,45 H59 M35,52 H59" stroke="#9a7718" stroke-width="2.5"/></svg></div>
      <div class="dock-item"><svg viewBox="0 0 94 88"><ellipse cx="47" cy="44" rx="40" ry="41" fill="#bde5f2"/><path d="M41,30 L46,30 L50,30 L54,30 L60,62 H34 Z" fill="#1e1e1e"/><path d="M30,64 H64 V68 H30 Z" fill="#1e1e1e"/><path d="M45,26 L30,10 L24,18 Z M49,26 L64,10 L70,18 Z" fill="#555"/><rect x="45" y="36" width="4" height="9" fill="#bde5f2"/></svg></div>
      <div class="dock-item"><svg viewBox="0 0 94 88"><rect x="14" y="6" width="48" height="56" rx="8" fill="none" stroke="#2f78bb" stroke-width="13"/><rect x="34" y="26" width="48" height="56" rx="8" fill="none" stroke="#d0402c" stroke-width="13"/><path d="M34,26 H74 L80,34 H46 Z" fill="#ee8a74"/></svg></div>
      <div class="dock-item"><svg viewBox="0 0 94 88"><path d="M47,4 L84,46 C86,50 82,54 76,52 L66,50 C62,50 62,56 62,62 L60,76 C58,84 50,84 48,76 L46,68 C44,62 38,64 36,60 L32,54 L14,52 C8,50 8,46 10,44 Z" fill="#16161c"/><path d="M47,4 L64,24 L56,20 L50,30 L44,20 L36,28 L30,24 Z" fill="#f4f4f4"/><circle cx="22" cy="66" r="3" fill="#16161c"/><circle cx="74" cy="64" r="4" fill="#16161c"/></svg></div>
      <div class="dock-item"><svg viewBox="0 0 94 88"><path d="M36,20 C36,5 52,5 52,20 L50,62 C50,72 54,76 64,74 L50,86 C32,86 30,74 31,62 Z" fill="#1eb6cf"/><path d="M54,62 C62,58 76,58 88,60 C92,72 84,82 68,82 C54,84 48,74 54,62 Z" fill="#127e95"/></svg></div>
      <div class="dock-item"><svg viewBox="0 0 94 88"><rect x="30" y="16" width="56" height="64" fill="#f0f0f0"/><path d="M60,56 L80,82" stroke="#1c58b4" stroke-width="10"/><ellipse cx="42" cy="34" rx="26" ry="28" fill="#d8dfe8"/><ellipse cx="42" cy="34" rx="21" ry="23" fill="#a8c8ee"/></svg><i class="run"></i></div>
      <div class="dock-item"><svg viewBox="0 0 94 88"><path d="M18,14 C28,4 38,18 48,40 L60,66 C66,80 52,84 46,74 L24,36 C20,28 14,20 18,14 Z" fill="#56b848"/><path d="M74,10 C66,6 60,12 52,30 L50,36 L58,44 L72,24 C76,18 78,14 74,10 Z" fill="#3c8a3a"/><path d="M44,44 L24,72 C20,80 30,88 36,80 L52,56 Z" fill="#3f9a3c"/></svg><i class="run"></i></div>
    </div>
    <div class="dock-pinned">
      <div class="dock-item"><svg viewBox="0 0 94 88"><rect x="27" y="0" width="40" height="30" fill="#dfe6d8" stroke="#aaa"/><ellipse cx="47" cy="46" rx="37" ry="39" fill="#fff"/><ellipse cx="47" cy="46" rx="34" ry="36" fill="url(#blueBall)"/><path d="M50,20 L68,66 M44,20 L28,66 M18,46 H76" stroke="#f2f2f2" stroke-width="6"/></svg></div>
      <div class="dock-item"><svg viewBox="0 0 94 88"><rect x="24" y="2" width="46" height="40" fill="#ececec"/><rect x="16" y="12" width="62" height="72" fill="#fafafa" stroke="#ccc"/><rect x="18" y="30" width="58" height="4" fill="#58aee0"/><path d="M22,40 H72 M22,68 H72 M22,74 H72" stroke="#888" stroke-width="2"/><circle cx="30" cy="54" r="4" fill="#2a86c8"/><circle cx="47" cy="54" r="4" fill="#2a86c8"/><circle cx="64" cy="54" r="4" fill="#2a86c8"/><path d="M16,12 V84" stroke="#222" stroke-width="3" stroke-dasharray="3 3"/></svg></div>
      <div class="dock-item"><svg viewBox="0 0 94 88"><path d="M14,16 L23,82 H71 L80,16 Z" fill="url(#mesh)"/><rect x="20" y="72" width="54" height="11" rx="3" fill="url(#steel)"/><ellipse cx="47" cy="16" rx="33" ry="13" fill="#555" stroke="#bbb" stroke-width="3"/><path d="M26,20 L36,8 L44,18 L54,6 L68,18 Z" fill="#e8e8e8"/></svg></div>
    </div>
  </footer>
</div>
</body>
</html>
```
FILE: styles.css
```css
html, body {
  margin: 0;
  padding: 0;
  background: #0b0907;
}

.defs {
  position: absolute;
}

.screen {
  width: 2880px;
  height: 1800px;
  overflow: hidden;
  display: grid;
  grid-template-rows: 44px 1626px 130px;
  font-family: "Open Sans", sans-serif;
  color: #111;
}

/* menu bar */
.menubar {
  display: flex;
  align-items: center;
  background: linear-gradient(90deg, #aeaeae 0, #bcbcbc 500px, #d2d2d2 1000px, #cbcbc6 1500px, #eeebe0 1900px, #fbf9ee 100%);
  border-bottom: 1px solid #555;
  box-sizing: border-box;
  padding-left: 37px;
}

.apple {
  width: 34px;
  height: 38px;
}

.menus {
  display: flex;
  gap: 41px;
  margin-left: 37px;
  font-size: 27px;
}

.menu-app {
  font-size: 28px;
  font-weight: 700;
}

.tray {
  margin-left: auto;
  margin-right: 30px;
  display: grid;
  grid-template-columns: 50px 54px 55px 50px 50px 59px 61px 60px 57px 60px 68px 60px 65px 327px 128px 65px 65px;
  align-items: center;
  justify-items: center;
}

.tray svg {
  width: 34px;
  height: 34px;
}

.tray .tray-sound {
  width: 26px;
  height: 26px;
}

.tray-pct {
  font-size: 22px;
  justify-self: start;
  padding-left: 7px;
}

.tray .tray-batt {
  justify-self: start;
  margin-left: 4px;
  width: 42px;
}

.tray-clock {
  font-size: 28px;
  letter-spacing: .5px;
  white-space: pre;
  justify-self: start;
  padding-left: 3px;
}

.tray-user {
  font-size: 27px;
  font-weight: 600;
  color: #333;
  justify-self: start;
  padding-left: 4px;
}

.tray-s {
  font: 700 18px "DejaVu Sans", sans-serif;
  fill: #333;
}

/* browser window */
.desktop {
  display: flex;
  min-height: 0;
}

.window {
  width: 2838px;
  display: flex;
  flex-direction: column;
  border-radius: 8px 8px 4px 4px;
  overflow: hidden;
}

.tabstrip {
  height: 73px;
  flex: none;
  box-sizing: border-box;
  display: flex;
  align-items: flex-end;
  padding-left: 147px;
  background: linear-gradient(#ebebeb, #bdbdbd);
  position: relative;
}

.lights {
  position: absolute;
  left: 24px;
  top: 26px;
  display: flex;
  gap: 15px;
}

.light {
  width: 25px;
  height: 25px;
  border-radius: 50%;
  box-shadow: inset 0 0 0 1px rgba(0, 0, 0, .35);
}

.red {
  background: radial-gradient(circle at 50% 75%, #ff9d90, #d8322c 65%);
}

.amber {
  background: radial-gradient(circle at 50% 75%, #ffe08a, #e08a12 65%);
}

.lime {
  background: radial-gradient(circle at 50% 75%, #c9f09a, #62a83a 65%);
}

.tab {
  width: 196px;
  height: 50px;
  flex: none;
  position: relative;
  display: flex;
  align-items: center;
  font-size: 23px;
}

.tab-bg {
  position: absolute;
  left: 0;
  bottom: 0;
  width: 218px;
  height: 50px;
  fill: url(#tabOff);
  stroke: #a4a4a4;
  stroke-width: 1.5;
}

.tab-on {
  z-index: 2;
}

.tab-on::after {
  content: "";
  position: absolute;
  left: 3px;
  right: -19px;
  bottom: -2px;
  height: 3px;
  background: #ececec;
}

.tab-on .tab-bg {
  fill: url(#tabOn);
}

.fav {
  position: relative;
  width: 32px;
  height: 32px;
  margin-left: 31px;
  flex: none;
}

.fav-g-letter {
  font: 26px "Liberation Serif", serif;
  fill: #fff;
}

.fav-lj-letters {
  font: 700 22px "Liberation Sans", sans-serif;
  fill: #fff;
}

.tab-title {
  position: relative;
  margin-left: 5px;
  width: 92px;
  flex: none;
  white-space: nowrap;
  -webkit-mask-image: linear-gradient(90deg, #000 60%, transparent);
  mask-image: linear-gradient(90deg, #000 60%, transparent);
}

.tab-x {
  position: relative;
  margin-left: 11px;
  font: 700 20px "DejaVu Sans", sans-serif;
  color: #5e5e5e;
}

.newtab {
  position: absolute;
  left: 2716px;
  top: 33px;
  width: 64px;
  height: 34px;
}

.expand {
  position: absolute;
  left: 2790px;
  top: 21px;
  width: 28px;
  height: 28px;
}

.toolbar {
  height: 61px;
  flex: none;
  box-sizing: border-box;
  display: flex;
  align-items: flex-start;
  padding: 7px 20px 0 20px;
  background: linear-gradient(#ededed, #e2e2e2);
  border-top: 1px solid #a0a0a0;
}

.tool {
  width: 30px;
  height: 30px;
  margin: 11px 25px 0 0;
  flex: none;
}

.tool + .tool + .tool {
  margin-right: 23px;
}

.omnibox {
  flex: 1;
  height: 53px;
  box-sizing: border-box;
  background: #fff;
  border: 1px solid #b8b8b8;
  border-top-color: #8e8e8e;
  border-radius: 5px;
  display: flex;
  align-items: center;
  padding: 0 8px 0 15px;
}

.omni-page {
  width: 24px;
  height: 30px;
}

.url {
  font-size: 30px;
  margin-left: 15px;
  color: #111;
}

.url em {
  font-style: normal;
  color: #6a6a6a;
}

.star {
  width: 36px;
  height: 36px;
  margin-left: auto;
}

.hamburger {
  width: 30px;
  margin: 12px 0 0 23px;
  display: flex;
  flex-direction: column;
  gap: 4px;
}

.hamburger i {
  height: 6px;
  border-radius: 3px;
  background: #555;
}

.bookmarks {
  height: 56px;
  flex: none;
  box-sizing: border-box;
  display: flex;
  align-items: center;
  gap: 31.3px;
  padding: 0 0 3px 18px;
  font-size: 23.5px;
  background: linear-gradient(#e2e2e2, #d2d2d2);
  border-bottom: 1px solid #8a8a8a;
}

.bm {
  display: flex;
  align-items: center;
  gap: 12px;
  flex: none;
  white-space: nowrap;
}

.folder {
  width: 32px;
  height: 28px;
}

.apps-grid {
  width: 28px;
  height: 28px;
}

.bm-long {
  width: 271px;
}

.bm-fade {
  -webkit-mask-image: linear-gradient(90deg, #000 80%, transparent);
  mask-image: linear-gradient(90deg, #000 80%, transparent);
}

.bm-more {
  margin-left: auto;
  margin-right: 13px;
  color: #555;
  font-size: 26px;
}

.content {
  flex: 1;
  background: #fff;
  padding: 16px;
}

/* map */
.map {
  width: 1200px;
  height: 800px;
  position: relative;
  overflow: hidden;
  background: #f1eee8;
}

.map-svg {
  display: block;
}

.map-svg path {
  fill: none;
  vector-effect: non-scaling-stroke;
  stroke-linejoin: round;
}

.map-svg .roads {
  filter: blur(.6px);
}

.map-svg .lake path {
  fill: #b5d0d0;
}

.map-svg .r {
  stroke: #8ea5cd;
  stroke-width: 2.5;
}

.map-svg .g {
  stroke: #abdaab;
  stroke-width: 2;
}

.map-svg .b {
  stroke: #dcb8dc;
  stroke-width: 2.4;
  stroke-dasharray: 14 4;
}

.map-svg .route-fill {
  fill: rgba(255, 100, 50, .28);
  stroke: #ff7a55;
  stroke-width: 2;
}

.map-svg .route-blue {
  stroke: #4f6ff0;
  stroke-width: 10;
  stroke-opacity: .75;
}

.map-svg .route-red {
  stroke: #c0505a;
  stroke-width: 2.5;
}

.labels text {
  font: italic 18.5px "Open Sans", sans-serif;
  fill: #9f6f9e;
  text-anchor: middle;
  stroke: #fff;
  stroke-width: 3px;
  stroke-opacity: .85;
  paint-order: stroke;
}

.labels .end {
  text-anchor: end;
}

.labels .start {
  text-anchor: start;
}

.labels-country text {
  font: 20px "Open Sans", sans-serif;
  fill: #a084a8;
}

.zoom-ctl {
  position: absolute;
  left: 20px;
  top: 20px;
  width: 52px;
  background: #fff;
  border-radius: 8px;
  box-shadow: 0 2px 14px rgba(0, 0, 0, .45);
}

.zoom-btn {
  display: block;
  height: 52px;
  text-align: center;
  font: 700 38px/56px "Liberation Sans", sans-serif;
  color: #000;
}

.zoom-out {
  line-height: 52px;
}

.zoom-in {
  border-bottom: 2px solid #ccc;
}

.attribution {
  position: absolute;
  right: 0;
  bottom: 0;
  height: 32px;
  padding: 0 10px;
  font: 22px/32px "Liberation Sans", sans-serif;
  letter-spacing: .17px;
  color: #333;
  background: rgba(255, 255, 255, .7);
}

.attribution a {
  color: #0078a8;
}

/* window behind */
.behind {
  flex: 1;
  display: flex;
  flex-direction: column;
  border-radius: 0 8px 8px 0;
  overflow: hidden;
  background: #bdbdbd;
}

.behind-top {
  height: 120px;
  padding: 6px 0 0 18px;
  box-sizing: border-box;
  background: linear-gradient(#e4e2de, #8f8d8a);
  border-bottom: 2px solid #a8a8a8;
}

.behind-expand {
  width: 28px;
  height: 28px;
}

.behind-btn {
  height: 46px;
  margin: 8px 0 8px 0;
  box-sizing: border-box;
  background: #d8d8d8;
  border: 2px solid #aaa;
  border-left: 0;
  border-radius: 0 8px 8px 0;
  width: 35px;
  font: 700 28px/36px "Liberation Sans", sans-serif;
  color: #333;
}

.behind-rest {
  flex: 1;
  background: linear-gradient(90deg, #a0a0a0, #ececec);
}

/* dock */
.dock {
  position: relative;
  display: flex;
  align-items: flex-start;
  padding-top: 18px;
  box-sizing: border-box;
  overflow: hidden;
}

.floor {
  position: absolute;
  left: 0;
  top: 0;
}

.floor-top {
  fill: url(#floorFill);
}

.floor-shine {
  fill: #fff;
}

.floor-edge {
  fill: #9c9c9c;
}

.floor-sep {
  stroke: #8c8c8c;
  stroke-width: 2;
}

.desk-file {
  position: relative;
  width: 292px;
  flex: none;
  margin-top: -18px;
  box-sizing: border-box;
}

.desk-thumb {
  width: 91px;
  height: 46px;
  margin-left: 42px;
  box-sizing: border-box;
  background: #0d0a08;
  border: 5px solid #8c8c8c;
  border-top: 0;
}

.desk-name {
  margin: 16px 0 0 2px;
  font-size: 26px;
  color: #f0f0f0;
  white-space: nowrap;
}

.dock-apps,
.dock-pinned {
  display: flex;
  position: relative;
}

.dock-pinned {
  margin-left: 51px;
}

.dock-item {
  width: 93.8px;
  height: 112px;
  flex: none;
  position: relative;
}

.dock-item svg {
  display: block;
  width: 94px;
  height: 88px;
  -webkit-box-reflect: below -4px linear-gradient(transparent 78%, rgba(255, 255, 255, .4));
}

.run {
  position: absolute;
  left: 36px;
  top: 106px;
  width: 24px;
  height: 5px;
  background: #fff;
  box-shadow: 0 0 6px #8fe8ff;
}

.cal-month {
  font: 700 13px "Liberation Sans", sans-serif;
  fill: #fff;
}

.cal-day {
  font: 700 42px "Liberation Sans", sans-serif;
  fill: #111;
}

.term-dollar {
  font: 700 24px "Liberation Mono", monospace;
  fill: #22c83a;
}

.sublime-s {
  font: 700 44px "Open Sans", sans-serif;
  fill: #f59a23;
}

.badge-num {
  font: 700 17px "Liberation Sans", sans-serif;
  fill: #fff;
}
```
